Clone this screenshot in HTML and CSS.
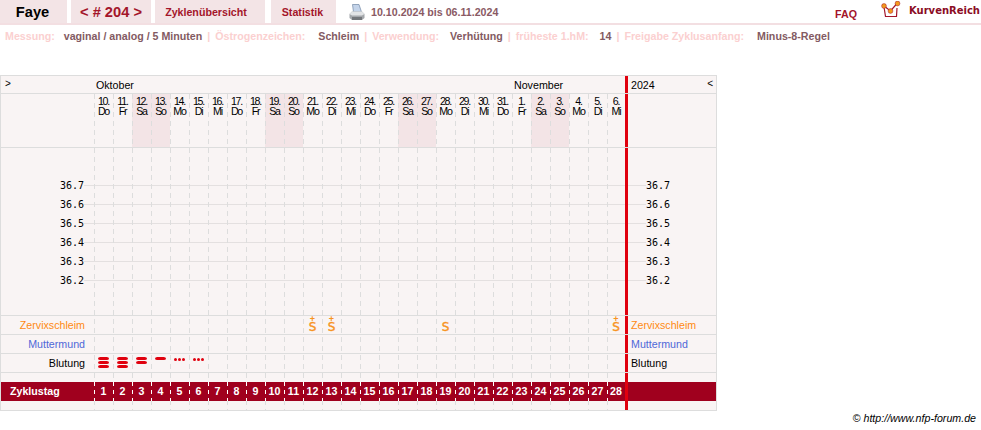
FILE: index.html
```html
<!DOCTYPE html>
<html lang="de">
<head>
  <meta charset="UTF-8">
  <meta name="viewport" content="width=device-width, initial-scale=1.0">
  <title>Faye - Zyklus 204</title>
  <link rel="stylesheet" href="styles.css">
</head>
<body>
  <header class="topbar">
    <div class="tab tab-name">Faye</div>
    <div class="tab tab-cycle">&lt; # 204 &gt;</div>
    <a class="tab tab-overview" href="#">Zyklenübersicht</a>
    <a class="tab tab-stats" href="#">Statistik</a>
    <svg class="printer" width="16" height="17" viewBox="0 0 16 17">
      <path d="M3.500 0.500 H10 L12.500 8 H4.500 Z" fill="#c4d4ea" stroke="#7f93ad" stroke-width="0.800"/>
      <path d="M0.500 10 L3 7.500 H13 L15.500 10 V14 L13 16 H3 L0.500 14 Z" fill="#a4a7ab"/>
      <path d="M0.500 10 L3 7.500 H13 L15.500 10 L13 11.500 H3 Z" fill="#e2e4e6"/>
      <path d="M3 13 H13 V16 H3 Z" fill="#74777b"/>
    </svg>
    <div class="period">10.10.2024 bis 06.11.2024</div>
    <a class="faq" href="#">FAQ</a>
    <svg class="logo" width="20" height="17" viewBox="0 0 20 17">
      <path d="M3 6 L4.500 15.500 H15.500 L16 7" fill="none" stroke="#a3152a" stroke-width="1.200"/>
      <path d="M3 5 L9.500 10 L16 2.500" fill="none" stroke="#a3152a" stroke-width="1.200"/>
      <circle cx="3" cy="5" r="2.400" fill="#f39a1c" stroke="#a3152a" stroke-width="0.500"/>
      <circle cx="9.500" cy="10" r="2.400" fill="#f39a1c" stroke="#a3152a" stroke-width="0.500"/>
      <circle cx="16.500" cy="2.500" r="2.400" fill="#f39a1c" stroke="#a3152a" stroke-width="0.500"/>
    </svg>
    <div class="brand">KurvenReich</div>
  </header>

  <div class="infoline">
    <span class="key key-tight">Messung:</span><span class="val">vaginal / analog / 5 Minuten</span>
    <span class="sep">|</span><span class="key key-wide">Östrogenzeichen:</span><span class="val">Schleim</span>
    <span class="sep">|</span><span class="key">Verwendung:</span><span class="val">Verhütung</span>
    <span class="sep">|</span><span class="key">früheste 1.hM:</span><span class="val">14</span>
    <span class="sep">|</span><span class="key key-wide">Freigabe Zyklusanfang:</span><span class="val">Minus-8-Regel</span>
  </div>

  <div class="chart">
    <div class="row row-months">
      <div class="lead toggle">&gt;</div>
      <div class="cells months"><span class="oct">Oktober</span><span>November</span></div>
      <div class="side side-year"><span>2024</span><span class="toggle">&lt;</span></div>
    </div>

    <div class="row row-days">
      <div class="lead"></div>
      <div class="cells">
        <div class="day">10.<br>Do</div>
        <div class="day">11.<br>Fr</div>
        <div class="day we">12.<br>Sa</div>
        <div class="day we">13.<br>So</div>
        <div class="day">14.<br>Mo</div>
        <div class="day">15.<br>Di</div>
        <div class="day">16.<br>Mi</div>
        <div class="day">17.<br>Do</div>
        <div class="day">18.<br>Fr</div>
        <div class="day we">19.<br>Sa</div>
        <div class="day we">20.<br>So</div>
        <div class="day">21.<br>Mo</div>
        <div class="day">22.<br>Di</div>
        <div class="day">23.<br>Mi</div>
        <div class="day">24.<br>Do</div>
        <div class="day">25.<br>Fr</div>
        <div class="day we">26.<br>Sa</div>
        <div class="day we">27.<br>So</div>
        <div class="day">28.<br>Mo</div>
        <div class="day">29.<br>Di</div>
        <div class="day">30.<br>Mi</div>
        <div class="day">31.<br>Do</div>
        <div class="day">1.<br>Fr</div>
        <div class="day we">2.<br>Sa</div>
        <div class="day we">3.<br>So</div>
        <div class="day">4.<br>Mo</div>
        <div class="day">5.<br>Di</div>
        <div class="day">6.<br>Mi</div>
      </div>
      <div class="side"></div>
    </div>

    <div class="row row-temps">
      <div class="temps">
        <div class="temp"><span class="deg">36.7</span><i class="rule"></i></div>
        <div class="temp"><span class="deg">36.6</span><i class="rule"></i></div>
        <div class="temp"><span class="deg">36.5</span><i class="rule"></i></div>
        <div class="temp"><span class="deg">36.4</span><i class="rule"></i></div>
        <div class="temp"><span class="deg">36.3</span><i class="rule"></i></div>
        <div class="temp"><span class="deg">36.2</span><i class="rule"></i></div>
      </div>
      <div class="side temps-side">
        <div class="temp"><i class="rule"></i><span class="deg">36.7</span></div>
        <div class="temp"><i class="rule"></i><span class="deg">36.6</span></div>
        <div class="temp"><i class="rule"></i><span class="deg">36.5</span></div>
        <div class="temp"><i class="rule"></i><span class="deg">36.4</span></div>
        <div class="temp"><i class="rule"></i><span class="deg">36.3</span></div>
        <div class="temp"><i class="rule"></i><span class="deg">36.2</span></div>
      </div>
    </div>

    <div class="row row-obs">
      <div class="lead orange">Zervixschleim</div>
      <div class="cells">
        <div class="mucus" style="grid-column: 12"><b>+</b>S</div>
        <div class="mucus" style="grid-column: 13"><b>+</b>S</div>
        <div class="mucus" style="grid-column: 19"><b></b>S</div>
        <div class="mucus" style="grid-column: 28"><b>+</b>S</div>
      </div>
      <div class="side orange">Zervixschleim</div>
    </div>
    <div class="row row-obs">
      <div class="lead blue">Muttermund</div>
      <div class="cells"></div>
      <div class="side blue">Muttermund</div>
    </div>
    <div class="row row-obs">
      <div class="lead">Blutung</div>
      <div class="cells">
        <div class="bleed"><i></i><i></i><i></i></div>
        <div class="bleed"><i></i><i></i><i></i></div>
        <div class="bleed"><i></i><i></i></div>
        <div class="bleed"><i></i></div>
        <div class="spot"><i></i><i></i><i></i></div>
        <div class="spot"><i></i><i></i><i></i></div>
      </div>
      <div class="side">Blutung</div>
    </div>

    <div class="row row-gap"><div class="side"></div></div>

    <div class="row row-band">
      <div class="lead band-title">Zyklustag</div>
      <div class="cells">
        <div class="num">1</div><div class="num">2</div><div class="num">3</div><div class="num">4</div>
        <div class="num">5</div><div class="num">6</div><div class="num">7</div><div class="num">8</div>
        <div class="num">9</div><div class="num">10</div><div class="num">11</div><div class="num">12</div>
        <div class="num">13</div><div class="num">14</div><div class="num">15</div><div class="num">16</div>
        <div class="num">17</div><div class="num">18</div><div class="num">19</div><div class="num">20</div>
        <div class="num">21</div><div class="num">22</div><div class="num">23</div><div class="num">24</div>
        <div class="num">25</div><div class="num">26</div><div class="num">27</div><div class="num">28</div>
      </div>
      <div class="side"></div>
    </div>

    <div class="row row-gap"><div class="side"></div></div>

    <!-- gestrichelte Tageslinien -->
    <div class="vlines">
      <i></i><i></i><i></i><i></i><i></i><i></i><i></i>
      <i></i><i></i><i></i><i></i><i></i><i></i><i></i>
      <i></i><i></i><i></i><i></i><i></i><i></i><i></i>
      <i></i><i></i><i></i><i></i><i></i><i></i><i></i>
    </div>
  </div>

  <footer class="credit">© <em>http://www.nfp-forum.de</em></footer>
</body>
</html>
```

FILE: styles.css
```css
body {
  font-family: "Liberation Sans", Arial, sans-serif;
  font-size: 10.67px;
  margin: 0;
  padding: 0;
  background-color: #fff;
  color: #000;
}
a {
  text-decoration: none;
}

/* Kopfzeile */
.topbar {
  display: flex;
  align-items: center;
  height: 23px;
  border-bottom: 2px solid #f3dfe2;
}
.tab {
  display: block;
  box-sizing: border-box;
  height: 23px;
  line-height: 24px;
  text-align: center;
  background-color: #f3e4e6;
  font-weight: bold;
  color: #a3152a;
}
.tab-name {
  width: 67px;
  margin-right: 4px;
  padding-right: 2px;
  font-size: 14.67px;
  color: #000;
}
.tab-cycle {
  width: 80px;
  margin-right: 4px;
  font-size: 14.67px;
}
.tab-overview {
  width: 110px;
  margin-right: 6px;
  padding-right: 8px;
}
.tab-stats {
  width: 65px;
  padding-right: 2px;
}
.printer {
  margin: 1px 6px 0 13px;
}
.period {
  font-weight: bold;
  color: #8a5a64;
}
.faq {
  margin: 5px 0 0 auto;
  font-weight: bold;
  color: #a3152a;
}
.logo {
  margin: 0 8px 5px 24px;
}
.brand {
  margin: 0 1px 3px 0;
  font-family: "DejaVu Sans", Verdana, sans-serif;
  font-size: 10px;
  font-weight: bold;
  color: #8a0c24;
}

/* Infozeile */
.infoline {
  display: flex;
  height: 22px;
  line-height: 22px;
  padding-left: 5px;
  font-weight: bold;
  margin-bottom: 28px;
}
.key {
  color: #fbd0d0;
  margin-right: 11px;
}
.key-tight {
  margin-right: 9px;
}
.key-wide {
  margin-right: 13px;
}
.val {
  color: #835a62;
}
.sep {
  color: #fbd0d0;
  margin: 0 5px;
}

/* Tabelle */
.chart {
  position: relative;
  width: 715px;
  border: 1px solid #ddd;
  background-color: #f9f4f4;
}
.row {
  display: flex;
  border-bottom: 1px solid #ddd;
}
.lead {
  width: 93px;
  flex: none;
  box-sizing: border-box;
  padding-right: 9px;
  text-align: right;
}
.cells {
  display: grid;
  flex: none;
  width: 531px;
  grid-template-columns: repeat(27, 19px) 18px;
}
.side {
  flex: none;
  width: 91px;
  margin-left: auto;
  padding-left: 3px;
  box-sizing: border-box;
  border-left: 3px solid #e0000e;
}
.row-months {
  height: 17px;
  line-height: 18px;
}
.row-months .lead {
  text-align: left;
  padding-left: 4px;
}
.toggle {
  font-size: 10px;
  line-height: 15px;
}
.months {
  display: flex;
}
.oct {
  width: 418px;
  padding-left: 2px;
}
.side-year {
  display: flex;
  justify-content: space-between;
  padding-right: 3px;
}
.row-days {
  height: 53px;
}
.day {
  padding-top: 2px;
  text-align: center;
  font-size: 10.67px;
  line-height: 10px;
  letter-spacing: -1.2px;
}
.we {
  background-color: #f3e4e6;
}

/* Temperaturbereich */
.row-temps {
  height: 167px;
}
.temps {
  flex: 1;
  padding-top: 28px;
}
.temps-side {
  padding-top: 28px;
  padding-left: 0;
}
.temp {
  display: flex;
  align-items: center;
  height: 19px;
}
.deg {
  flex: none;
  width: 83px;
  text-align: right;
  font-family: "DejaVu Sans Mono", monospace;
  font-size: 10px;
}
.rule {
  display: block;
  flex: 1;
  height: 1px;
  background-color: #e4e0e0;
}
.temps-side .rule {
  flex: none;
  width: 18px;
}
.temps-side .deg {
  width: 24px;
}

/* Beobachtungen */
.row-obs {
  height: 18px;
  line-height: 19px;
}
.orange {
  color: #ff8a12;
}
.blue {
  color: #4f68d8;
}
.mucus {
  text-align: center;
  font-family: "DejaVu Sans", sans-serif;
  font-size: 12px;
  line-height: 10px;
  color: #f7931e;
  -webkit-text-stroke: 0.4px #f7931e;
}
.mucus b {
  display: block;
  height: 6px;
  font-family: "Liberation Sans", sans-serif;
  font-size: 9px;
  line-height: 6px;
  font-weight: bold;
  -webkit-text-stroke: 0;
}
.bleed {
  padding-top: 3px;
}
.bleed i {
  display: block;
  width: 11px;
  height: 3px;
  margin: 0 0 1px 4px;
  border-radius: 3px / 2px;
  background-color: #e0000e;
}
.spot {
  display: flex;
  gap: 1px;
  padding: 4px 0 0 4px;
}
.spot i {
  width: 3px;
  height: 3px;
  border-radius: 50%;
  background-color: #e0000e;
}
.row-gap {
  height: 9px;
  border-bottom: 0;
  justify-content: flex-end;
}
.row-band {
  position: relative;
  z-index: 1;
  height: 19px;
  line-height: 19px;
  border-bottom: 0;
  background-color: #a0001e;
  color: #fff;
  font-weight: bold;
}
.band-title {
  padding: 0 0 0 9px;
  text-align: left;
}
.num {
  text-align: center;
  background-image: repeating-linear-gradient(to bottom, #fff 0 4px, transparent 4px 8px);
  background-size: 1px 100%;
  background-repeat: no-repeat;
}

/* gestrichelte Linien liegen ueber dem Raster */
.vlines {
  position: absolute;
  top: 18px;
  bottom: 0;
  left: 93px;
  display: flex;
  pointer-events: none;
}
.vlines i {
  display: block;
  width: 19px;
  background-image: repeating-linear-gradient(to bottom, #ddd 0 5px, transparent 5px 9px);
  background-size: 1px 100%;
  background-repeat: no-repeat;
}
.vlines i:last-child {
  width: 18px;
}

.credit {
  margin-top: 1px;
  padding-right: 5px;
  text-align: right;
  line-height: 13px;
}
```
